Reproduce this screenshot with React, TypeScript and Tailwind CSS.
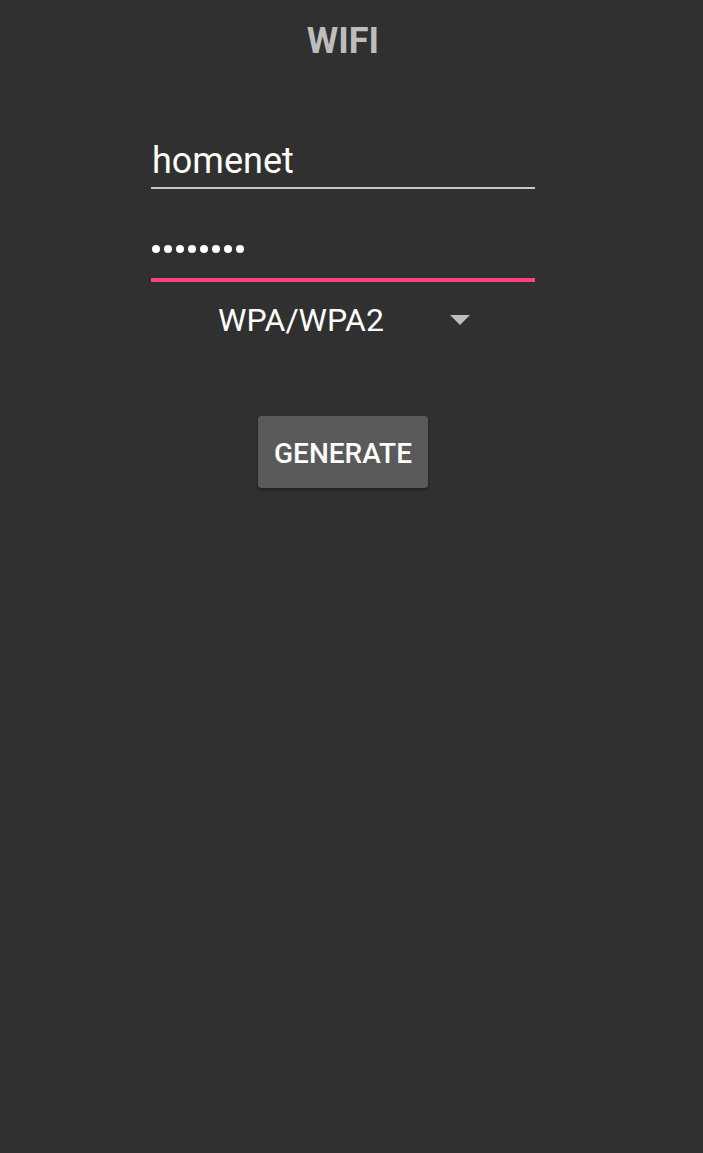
export default function App() {
  return (
    <div
      className="min-h-[1153px] w-full bg-[#303030] pr-[17px]"
      style={{ fontFamily: "Roboto, 'Liberation Sans', sans-serif" }}
    >
      <div className="flex flex-col items-center">
        <h1 className="mt-[21px] text-[36px] font-bold leading-[40px] text-[#bdbdbd]">WIFI</h1>

        <div className="mt-[76px] w-[384px]">
          <div className="border-b-2 border-[#c8c8c8] pb-[2px] pl-[1px] text-[36px] leading-[48px] text-white">
            homenet
          </div>
        </div>

        <div className="mt-[37px] w-[384px]">
          <div className="flex h-[56px] items-center gap-[4px] border-b-4 border-[#ff4081] pb-[6px] pl-[1px]">
            {Array.from({ length: 8 }).map((_, i) => (
              <span key={i} className="h-2 w-2 rounded-full bg-white" />
            ))}
          </div>
        </div>

        <div className="mt-[18px] flex items-center pl-[2px]">
          <span className="text-[32px] leading-[40px] text-white">WPA/WPA2</span>
          <svg className="ml-[66px]" width="20" height="10" viewBox="0 0 20 10">
            <path d="M0 0 L20 0 L10 10 Z" fill="#bdbdbd" />
          </svg>
        </div>

        <button className="mt-[76px] flex h-[72px] w-[170px] items-center justify-center rounded-[4px] bg-[#5a5a5a] pt-[4px] text-[28px] font-medium text-white shadow-[0_2px_3px_rgba(0,0,0,0.35)]">
          GENERATE
        </button>
      </div>
    </div>
  );
}
